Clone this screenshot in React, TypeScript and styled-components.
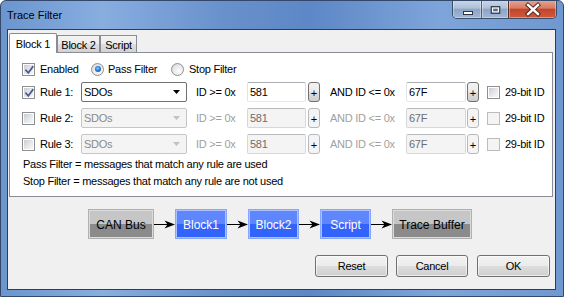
import React from 'react';
import styled, { createGlobalStyle, css } from 'styled-components';

const GlobalStyle = createGlobalStyle`
  html, body { margin: 0; padding: 0; background: #ffffff; }
  body { font-family: "Liberation Sans", Arial, sans-serif; }
  * { box-sizing: border-box; }
`;

const Window = styled.div`
  width: 564px;
  height: 297px;
  border: 1px solid #34496a;
  border-radius: 6px 6px 0 0;
  background: linear-gradient(90deg, #6b95ce 0%, #88aee0 18%, #6890cb 40%, #5d87c6 55%, #7ea5da 78%, #6f98d0 100%);
  padding: 0 7px 6px 6px;
  display: flex;
  flex-direction: column;
  overflow: hidden;
`;

const TitleBar = styled.div`
  height: 28px;
  display: flex;
  align-items: flex-start;
`;

const TitleText = styled.div`
  margin-top: 7px;
  font-size: 11px;
  line-height: 14px;
  color: #000;
`;

const CaptionGroup = styled.div`
  margin-left: auto;
  margin-top: -1px;
  margin-right: -1px;
  display: flex;
  height: 19px;
  border: 1px solid #3b4e6c;
  border-top: none;
  border-radius: 0 0 5px 5px;
  overflow: hidden;
`;

const CaptionButton = styled.div<{ $w: number; $close?: boolean }>`
  width: ${p => p.$w}px;
  height: 100%;
  display: flex;
  align-items: center;
  justify-content: center;
  border-left: 1px solid ${p => (p.$close ? '#5a2a22' : '#4a6184')};
  &:first-child { border-left: none; }
  background: ${p =>
    p.$close
      ? 'linear-gradient(#e6a898 0%, #d77a62 45%, #c3452b 52%, #d05a3c 100%)'
      : 'linear-gradient(#cbd8ea 0%, #aebfd8 45%, #8da5c6 52%, #a2b7d5 100%)'};
  box-shadow: inset 0 0 0 1px rgba(255, 255, 255, 0.35);
`;

const Client = styled.div`
  flex: 1;
  border: 1px solid #2c3d5b;
  background: #f0f0f0;
  display: flex;
  flex-direction: column;
`;

const TabControl = styled.div`
  margin: 3px 2px 0 1px;
  display: flex;
  flex-direction: column;
`;

const TabStrip = styled.div`
  height: 19px;
  display: flex;
  align-items: flex-end;
  position: relative;
  z-index: 1;
`;

const Tab = styled.div<{ $selected?: boolean; $w: number }>`
  width: ${p => p.$w}px;
  border: 1px solid #898c95;
  border-bottom: none;
  font-size: 11px;
  letter-spacing: -0.25px;
  color: #000;
  display: flex;
  align-items: center;
  justify-content: center;
  ${p =>
    p.$selected
      ? css`
          height: 20px;
          margin-bottom: -1px;
          background: #ffffff;
          border-radius: 2px 2px 0 0;
        `
      : css`
          height: 17px;
          padding-top: 1px;
          background: linear-gradient(#f3f3f3 0%, #ececec 50%, #dedede 50%, #d2d2d2 100%);
        `}
`;

const Panel = styled.div`
  background: #ffffff;
  border: 1px solid #898c95;
  padding: 9px 0 6px 12px;
  display: flex;
  flex-direction: column;
`;

const TopRow = styled.div`
  height: 14px;
  display: flex;
  align-items: center;
  margin-bottom: 6px;
`;

const Label = styled.span<{ $disabled?: boolean; $w?: number; $pl?: number }>`
  font-size: 11px;
  letter-spacing: -0.25px;
  color: ${p => (p.$disabled ? '#a0a0a0' : '#000')};
  white-space: nowrap;
  ${p => (p.$w !== undefined ? `width: ${p.$w}px;` : '')}
  padding-left: ${p => p.$pl ?? 0}px;
`;

const RadioOption = styled.label<{ $w: number }>`
  width: ${p => p.$w}px;
  display: flex;
  align-items: center;
  gap: 4px;
`;

const RadioCircle = styled.span<{ $on?: boolean }>`
  width: 13px;
  height: 13px;
  border-radius: 50%;
  border: 1px solid #8e8f8f;
  background: radial-gradient(circle at 65% 65%, #fdfdfd 0%, #e4e6ea 60%, #c9ccd2 100%);
  display: inline-flex;
  align-items: center;
  justify-content: center;
  flex: none;
  &::after {
    content: '';
    display: ${p => (p.$on ? 'block' : 'none')};
    width: 6px;
    height: 6px;
    border-radius: 50%;
    background: radial-gradient(circle at 45% 40%, #8cd3ff 0%, #2b7bd6 45%, #0d3f8a 100%);
  }
`;

const Box = styled.span<{ $disabled?: boolean }>`
  width: 13px;
  height: 13px;
  flex: none;
  border: 1px solid ${p => (p.$disabled ? '#bcbcbc' : '#8e8f8f')};
  background: ${p => (p.$disabled ? '#f4f4f4' : '#ffffff')};
  display: inline-flex;
  align-items: center;
  justify-content: center;
  position: relative;
  &::before {
    content: '';
    width: 9px;
    height: 9px;
    background: ${p =>
      p.$disabled ? '#f4f4f4' : 'linear-gradient(135deg, #c9cdd3 0%, #e6e8eb 55%, #f8f8f8 100%)'};
  }
  svg { position: absolute; left: 0; top: 0; }
`;

const RuleList = styled.div`
  display: flex;
  flex-direction: column;
  gap: 6px;
`;

const RuleRow = styled.div`
  display: grid;
  grid-template-columns: 13px 46px 106px 60px 59px 14px 86px 60px 13px 21px auto;
  align-items: center;
  height: 20px;
`;

const Combo = styled.div<{ $disabled?: boolean }>`
  height: 20px;
  border: 1px solid ${p => (p.$disabled ? '#c4c7ca' : '#707070')};
  border-radius: 2px;
  background: ${p => (p.$disabled ? '#f4f4f4' : '#ffffff')};
  display: flex;
  align-items: center;
  justify-content: space-between;
  padding: 0 6px 0 2px;
  font-size: 11px;
  letter-spacing: -0.25px;
  color: ${p => (p.$disabled ? '#8a8a8a' : '#000')};
`;

const TextBox = styled.div<{ $disabled?: boolean }>`
  height: 20px;
  border: 1px solid;
  border-color: ${p => (p.$disabled ? '#b8babe #d5d7da #d5d7da #d5d7da' : '#abadb3 #dbdfe6 #e3e9ef #e2e3ea')};
  border-radius: 2px;
  background: ${p => (p.$disabled ? '#f4f4f4' : '#ffffff')};
  display: flex;
  align-items: center;
  padding: 0 2px;
  font-size: 11px;
  letter-spacing: -0.25px;
  color: ${p => (p.$disabled ? '#6d6d6d' : '#000')};
`;

const PlusCell = styled.div<{ $ml: number }>`
  display: flex;
  padding-left: ${p => p.$ml}px;
`;

const PlusButton = styled.div<{ $disabled?: boolean }>`
  width: 12px;
  height: 20px;
  border: 1px solid ${p => (p.$disabled ? '#b5b9bc' : '#707070')};
  border-radius: 3px;
  background: ${p =>
    p.$disabled ? '#f4f4f4' : 'linear-gradient(#f2f2f2 0%, #ebebeb 50%, #dddddd 50%, #cfcfcf 100%)'};
  display: flex;
  align-items: center;
  justify-content: center;
  font-size: 11px;
  color: #000;
  padding-top: 1px;
`;

const BoxCell = styled.div<{ $pl: number }>`
  display: flex;
  padding-left: ${p => p.$pl}px;
`;

const Notes = styled.div`
  margin-top: 2px;
  margin-left: 1px;
  font-size: 11px;
  letter-spacing: -0.25px;
  line-height: 17px;
  color: #000;
`;

const Diagram = styled.div`
  margin-top: 12px;
  padding-left: 80px;
  display: flex;
  align-items: center;
  height: 30px;
`;

const Node = styled.div<{ $w: number; $blue?: boolean }>`
  width: ${p => p.$w}px;
  height: 30px;
  display: flex;
  align-items: center;
  justify-content: center;
  font-size: 12px;
  padding-top: 1px;
  color: ${p => (p.$blue ? '#ffffff' : '#000000')};
  border: 1px solid ${p => (p.$blue ? '#86a6ff' : '#b0b0b0')};
  box-shadow: inset 0 0 0 1px ${p => (p.$blue ? '#aac0ff' : '#dcdcdc')};
  background: ${p =>
    p.$blue
      ? 'linear-gradient(#5e86ff 0%, #5e86ff 50%, #3263fb 50%, #3263fb 100%)'
      : 'linear-gradient(#c6c6c6 0%, #c6c6c6 50%, #8b8b8b 50%, #8b8b8b 100%)'};
`;

const ArrowSvg = styled.svg`
  display: block;
  flex: none;
`;

const ButtonRow = styled.div`
  margin-top: 16px;
  display: flex;
  justify-content: flex-end;
  padding-right: 5px;
`;

const Button = styled.div<{ $w: number; $ml: number }>`
  width: ${p => p.$w}px;
  margin-left: ${p => p.$ml}px;
  height: 22px;
  border: 1px solid #707070;
  border-radius: 3px;
  background: linear-gradient(#f2f2f2 0%, #ebebeb 50%, #dddddd 50%, #cfcfcf 100%);
  box-shadow: inset 0 0 0 1px rgba(255, 255, 255, 0.6);
  display: flex;
  align-items: center;
  justify-content: center;
  font-size: 11px;
  letter-spacing: -0.25px;
  color: #000;
`;

const Check = () => (
  <svg width="13" height="13" viewBox="0 0 13 13">
    <path d="M3 6.2 L5.3 8.8 L9.8 2.8" fill="none" stroke="#4a5d8e" strokeWidth="1.7" strokeLinecap="square" />
  </svg>
);

const CheckBox = ({ checked, disabled }: { checked?: boolean; disabled?: boolean }) => (
  <Box $disabled={disabled}>{checked && <Check />}</Box>
);

const ComboArrow = ({ disabled }: { disabled?: boolean }) => (
  <svg width="7" height="4" viewBox="0 0 7 4">
    <path d="M0 0 H7 L3.5 4 Z" fill={disabled ? '#c2c2c2' : '#000'} />
  </svg>
);

const Arrow = () => (
  <ArrowSvg width="21" height="30" viewBox="0 0 21 30">
    <line x1="0" y1="15.5" x2="14" y2="15.5" stroke="#000" strokeWidth="1" />
    <path d="M21 15.5 L10.5 11.5 L13.5 15.5 L10.5 19.5 Z" fill="#000" />
  </ArrowSvg>
);

const rules = [
  { n: 1, on: true },
  { n: 2, on: false },
  { n: 3, on: false },
];

const nodes = [
  { t: 'CAN Bus', w: 66, blue: false },
  { t: 'Block1', w: 52, blue: true },
  { t: 'Block2', w: 51, blue: true },
  { t: 'Script', w: 51, blue: true },
  { t: 'Trace Buffer', w: 80, blue: false },
];

export default function App() {
  return (
    <>
      <GlobalStyle />
      <Window>
        <TitleBar>
          <TitleText>Trace Filter</TitleText>
          <CaptionGroup>
            <CaptionButton $w={28}>
              <svg width="28" height="18" viewBox="0 0 28 18">
                <rect x="10.5" y="11.5" width="9" height="3" fill="#fff" stroke="#2b3546" strokeWidth="1" />
              </svg>
            </CaptionButton>
            <CaptionButton $w={27}>
              <svg width="27" height="18" viewBox="0 0 27 18">
                <rect x="9.5" y="6.5" width="9" height="7" fill="#5d6f8c" stroke="#2b3546" strokeWidth="1" />
                <rect x="11" y="8" width="6" height="4" fill="none" stroke="#fff" strokeWidth="1.2" />
              </svg>
            </CaptionButton>
            <CaptionButton $w={48} $close>
              <svg width="46" height="18" viewBox="0 0 46 18">
                <path d="M18 5 L28 14 M28 5 L18 14" stroke="#4a1d14" strokeWidth="4.2" strokeLinecap="square" />
                <path d="M18 5 L28 14 M28 5 L18 14" stroke="#ffffff" strokeWidth="2.4" strokeLinecap="square" />
              </svg>
            </CaptionButton>
          </CaptionGroup>
        </TitleBar>
        <Client>
          <TabControl>
            <TabStrip>
              <Tab $selected $w={48}>Block 1</Tab>
              <Tab $w={43}>Block 2</Tab>
              <Tab $w={37}>Script</Tab>
            </TabStrip>
            <Panel>
              <TopRow>
                <CheckBox checked />
                <Label $w={56} $pl={5}>Enabled</Label>
                <RadioOption $w={80}>
                  <RadioCircle $on />
                  <Label>Pass Filter</Label>
                </RadioOption>
                <RadioOption $w={90}>
                  <RadioCircle />
                  <Label $pl={1}>Stop Filter</Label>
                </RadioOption>
              </TopRow>
              <RuleList>
                {rules.map(r => {
                  const dis = !r.on;
                  return (
                    <RuleRow key={r.n}>
                      <CheckBox checked={r.on} />
                      <Label $pl={5}>Rule {r.n}:</Label>
                      <Combo $disabled={dis}>
                        <span>SDOs</span>
                        <ComboArrow disabled={dis} />
                      </Combo>
                      <Label $disabled={dis} $pl={9}>ID &gt;= 0x</Label>
                      <TextBox $disabled={dis}>581</TextBox>
                      <PlusCell $ml={2}>
                        <PlusButton $disabled={dis}>+</PlusButton>
                      </PlusCell>
                      <Label $disabled={dis} $pl={10}>AND ID &lt;= 0x</Label>
                      <TextBox $disabled={dis}>67F</TextBox>
                      <PlusCell $ml={1}>
                        <PlusButton $disabled={dis}>+</PlusButton>
                      </PlusCell>
                      <BoxCell $pl={8}>
                        <CheckBox disabled={dis} />
                      </BoxCell>
                      <Label $pl={5}>29-bit ID</Label>
                    </RuleRow>
                  );
                })}
              </RuleList>
              <Notes>
                <div>Pass Filter = messages that match any rule are used</div>
                <div>Stop Filter = messages that match any rule are not used</div>
              </Notes>
            </Panel>
          </TabControl>
          <Diagram>
            {nodes.map((n, i) => (
              <React.Fragment key={n.t}>
                {i > 0 && <Arrow />}
                <Node $w={n.w} $blue={n.blue}>{n.t}</Node>
              </React.Fragment>
            ))}
          </Diagram>
          <ButtonRow>
            <Button $w={73} $ml={0}>Reset</Button>
            <Button $w={72} $ml={8}>Cancel</Button>
            <Button $w={73} $ml={9}>OK</Button>
          </ButtonRow>
        </Client>
      </Window>
    </>
  );
}
